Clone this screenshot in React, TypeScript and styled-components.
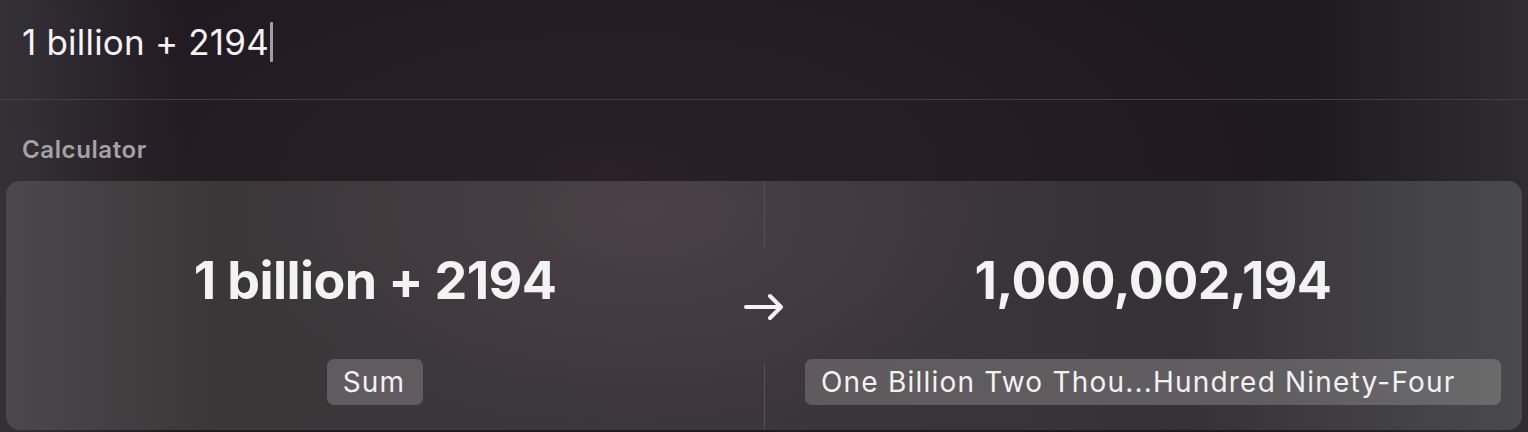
import React from "react";
import styled, { createGlobalStyle } from "styled-components";

const Global = createGlobalStyle`
  html, body {
    margin: 0;
    padding: 0;
    width: 1528px;
    height: 432px;
    overflow: hidden;
    background: #211a1f;
  }
  * { box-sizing: border-box; }
`;

const Window = styled.div`
  width: 1528px;
  height: 432px;
  display: flex;
  flex-direction: column;
  font-family: Inter, "Noto Sans", sans-serif;
  color: #f2f2f2;
  background:
    linear-gradient(90deg, rgba(70, 68, 72, 0.55) 0%, rgba(70, 68, 72, 0) 12%),
    linear-gradient(270deg, rgba(60, 60, 64, 0.55) 0%, rgba(60, 60, 64, 0) 14%),
    radial-gradient(ellipse 700px 300px at 40% 40%, #2a2026 0%, rgba(42, 32, 38, 0) 100%),
    #1f1a20;
`;

const SearchBar = styled.div`
  height: 100px;
  flex: 0 0 100px;
  display: flex;
  align-items: center;
  padding: 0 0 16px 22px;
  border-bottom: 1px solid #433e43;
`;

const Query = styled.span`
  font-size: 35px;
  font-weight: 400;
  letter-spacing: 0.2px;
  color: #f4f4f4;
`;

const Caret = styled.span`
  display: inline-block;
  width: 3px;
  height: 40px;
  margin-left: 1px;
  border-radius: 1px;
  background: #a09ea0;
`;

const SectionTitle = styled.div`
  padding: 35px 0 0 22px;
  height: 81px;
  font-size: 24px;
  font-weight: 600;
  color: #a5a2a5;
  letter-spacing: 0.6px;
`;

const Card = styled.div`
  margin: 0 6px;
  height: 249px;
  border-radius: 14px;
  display: grid;
  grid-template-columns: 1fr 40px 1fr;
  background:
    radial-gradient(ellipse 420px 220px at 42% 12%, rgba(88, 72, 78, 0.55) 0%, rgba(88, 72, 78, 0) 100%),
    linear-gradient(90deg, #4a484a 0%, #3a3739 14%, #3b363a 50%, #353236 78%, #4a4a4c 100%);
`;

const Side = styled.div`
  display: flex;
  flex-direction: column;
  align-items: center;
  padding-top: 68px;
`;

const BigValue = styled.div`
  font-size: 52px;
  font-weight: 700;
  line-height: 64px;
  letter-spacing: -0.6px;
  color: #f3f3f3;
`;

const Badge = styled.div<{ $width?: number }>`
  margin-top: 46px;
  height: 46px;
  display: flex;
  align-items: center;
  padding: 0 18px 0 16px;
  border-radius: 7px;
  font-size: 28px;
  font-weight: 400;
  letter-spacing: 1.2px;
  color: #f2f2f2;
  white-space: nowrap;
  width: ${(p) => (p.$width ? `${p.$width}px` : "auto")};
  background: ${(p) =>
    p.$width
      ? "linear-gradient(90deg, #5e5a5e 0%, #615e61 70%, #6a6a6b 100%)"
      : "#5f5b5e"};
`;

const Middle = styled.div`
  display: flex;
  flex-direction: column;
  align-items: center;
`;

const Divider = styled.div<{ $h?: number }>`
  width: 1px;
  background: #575256;
  ${(p) => (p.$h ? `height: ${p.$h}px;` : "flex: 1;")}
`;

const ArrowSlot = styled.div`
  height: 117px;
  display: flex;
  align-items: center;
  justify-content: center;
  padding-top: 4px;
`;

const Arrow = () => (
  <svg width="42" height="30" viewBox="0 0 42 30" fill="none">
    <path
      d="M3 15 H38 M27 4 L38 15 L27 26"
      stroke="#f4f4f4"
      strokeWidth="4"
      strokeLinecap="round"
      strokeLinejoin="round"
    />
  </svg>
);

export default function App() {
  return (
    <Window>
      <Global />
      <SearchBar>
        <Query>1 billion + 2194</Query>
        <Caret />
      </SearchBar>
      <SectionTitle>Calculator</SectionTitle>
      <Card>
        <Side>
          <BigValue>1 billion + 2194</BigValue>
          <Badge>Sum</Badge>
        </Side>
        <Middle>
          <Divider $h={65} />
          <ArrowSlot>
            <Arrow />
          </ArrowSlot>
          <Divider />
        </Middle>
        <Side>
          <BigValue>1,000,002,194</BigValue>
          <Badge $width={696}>One Billion Two Thou...Hundred Ninety-Four</Badge>
        </Side>
      </Card>
    </Window>
  );
}
